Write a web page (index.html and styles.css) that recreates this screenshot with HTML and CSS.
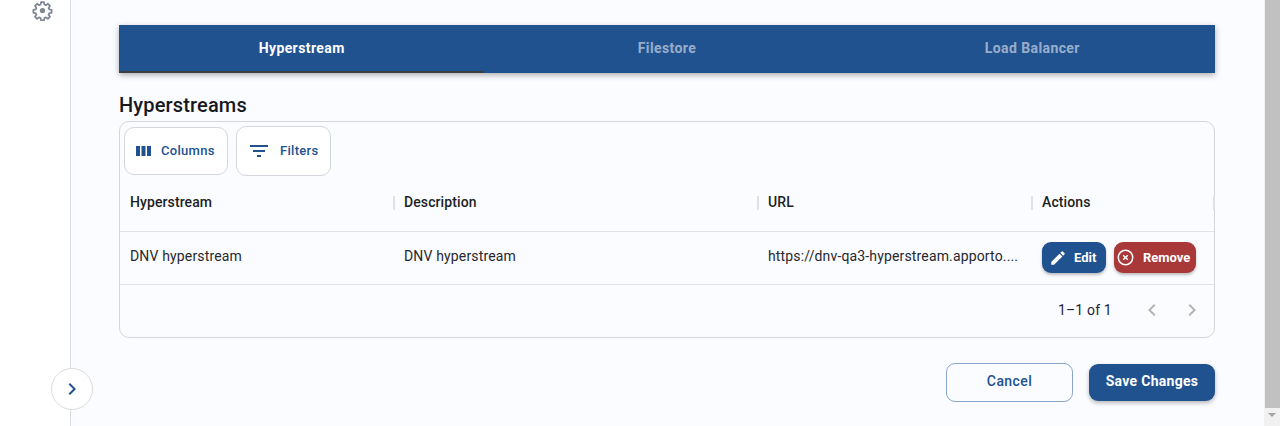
FILE: index.html
```html
<!DOCTYPE html>
<html lang="en">
<head>
<meta charset="utf-8">
<title>Hyperstreams</title>
<link rel="stylesheet" href="styles.css">
</head>
<body>
<div class="app">
  <aside class="sidebar">
    <svg class="gear" viewBox="0 0 24 24" width="21" height="21" fill="none" stroke="#7d8794" stroke-width="2" stroke-linejoin="round"><path d="M10.300 2.500h3.400l.5 2.700 1.700.7 2.300-1.600 2.400 2.400-1.600 2.300.7 1.700 2.700.5v3.400l-2.700.5-.7 1.700 1.600 2.300-2.400 2.400-2.300-1.600-1.700.7-.5 2.700h-3.400l-.5-2.700-1.700-.7-2.300 1.600-2.400-2.400 1.600-2.300-.7-1.700-2.700-.5v-3.400l2.700-.5.7-1.700-1.600-2.300 2.400-2.400 2.300 1.600 1.700-.7z"/><circle cx="12" cy="12" r="3" fill="#7d8794" stroke="none"/></svg>
  </aside>
  <button class="toggle" type="button" aria-label="Expand">
    <svg viewBox="0 0 24 24" width="24" height="24" fill="#215290"><path d="M10 6 8.590 7.410 13.170 12l-4.580 4.590L10 18l6-6z"/></svg>
  </button>
  <main class="main">
    <nav class="tabs">
      <div class="tab active">Hyperstream</div>
      <div class="tab">Filestore</div>
      <div class="tab">Load Balancer</div>
    </nav>
    <h1 class="title">Hyperstreams</h1>
    <section class="grid">
      <div class="toolbar">
        <button class="tool tool-columns" type="button">
          <svg viewBox="0 0 15 12" width="15" height="12" fill="#215290"><path d="M0 1h4v10H0zM5.500 1h4v10h-4zM11 1h4v10h-4z"/></svg>
          <span>Columns</span>
        </button>
        <button class="tool tool-filters" type="button">
          <svg viewBox="0 0 18 12" width="18" height="12" fill="#215290"><path d="M0 0h18v2H0zM3 5h12v2H3zM7 10h4v2H7z"/></svg>
          <span>Filters</span>
        </button>
      </div>
      <div class="row head">
        <div class="cell c1">Hyperstream</div>
        <div class="cell c2">Description</div>
        <div class="cell c3">URL</div>
        <div class="cell c4">Actions</div>
      </div>
      <div class="row body">
        <div class="cell c1 text">DNV hyperstream</div>
        <div class="cell c2 text">DNV hyperstream</div>
        <div class="cell c3 text"><span class="clip">https://dnv-qa3-hyperstream.apporto....</span></div>
        <div class="cell c4 actions">
          <button class="act edit" type="button">
            <svg viewBox="0 0 24 24" width="18" height="18" fill="#fff"><path d="M3 17.250V21h3.750L17.810 9.940l-3.750-3.750zM20.710 7.040a1 1 0 0 0 0-1.410l-2.340-2.340a1 1 0 0 0-1.410 0l-1.830 1.830 3.750 3.750z"/></svg>
            <span>Edit</span>
          </button>
          <button class="act remove" type="button">
            <svg viewBox="0 0 16 16" width="17" height="17" fill="none" stroke="#fff"><circle cx="8" cy="8" r="6.800" stroke-width="1.400"/><path d="M5.800 5.800l4.400 4.400M10.200 5.800l-4.400 4.400" stroke-width="1.400"/></svg>
            <span>Remove</span>
          </button>
        </div>
      </div>
      <div class="pager">
        <span class="count">1–1 of 1</span>
        <svg class="nav" viewBox="0 0 24 24" width="24" height="24" fill="#b4b4b4"><path d="M15.410 7.410 14 6l-6 6 6 6 1.410-1.410L10.830 12z"/></svg>
        <svg class="nav" viewBox="0 0 24 24" width="24" height="24" fill="#b4b4b4"><path d="M10 6 8.590 7.410 13.170 12l-4.580 4.590L10 18l6-6z"/></svg>
      </div>
    </section>
    <footer class="footer">
      <button class="btn cancel" type="button">Cancel</button>
      <button class="btn save" type="button">Save Changes</button>
    </footer>
  </main>
  <div class="scrollbar">
    <div class="thumb"></div>
    <div class="arrow"></div>
  </div>
</div>
</body>
</html>
```

FILE: styles.css
```css
* { box-sizing: border-box; }
html, body { margin: 0; height: 100%; overflow: hidden; }
body { font-family: Roboto, "Liberation Sans", sans-serif; color: #1b1b1f; }
button { font-family: inherit; cursor: pointer; }

.app { position: relative; display: flex; width: 1280px; height: 426px; background: #fff; overflow: hidden; }

.sidebar { flex: 0 0 71px; background: #fff; border-right: 1px solid #d9dce3; display: flex; justify-content: center; align-items: flex-start; padding-left: 15px; }

.toggle { position: absolute; left: 51px; top: 368px; width: 42px; height: 42px; border-radius: 50%; border: 1px solid #dcdcdc; background: #fff; padding: 0; display: flex; align-items: center; justify-content: center; z-index: 2; }

.main { flex: 1 1 auto; background: #fbfcff; padding: 25px 49px 0 48px; min-width: 0; }

.tabs { display: flex; height: 48px; background: #215290; box-shadow: 0 2px 6px rgba(0,0,0,.32); }
.tab { flex: 1 1 0; display: flex; align-items: center; justify-content: center; padding-bottom: 2px; font-size: 14px; font-weight: 700; letter-spacing: .4px; color: rgba(255,255,255,.55); }
.tab.active { color: #fff; box-shadow: inset 0 -2px 0 #3a4040; }

.title { margin: 20px 0 0; font-size: 20px; line-height: 24px; font-weight: 500; letter-spacing: .15px; color: #16181d; }

.grid { margin-top: 4px; height: 217px; border: 1px solid #d3d6dc; border-radius: 10px; display: flex; flex-direction: column; }

.toolbar { display: flex; align-items: center; gap: 8px; padding: 3px 0 0 4px; height: 55px; }
.tool { display: flex; align-items: center; background: #fff; border: 1px solid #d3d6dc; border-radius: 10px; padding: 0; font-size: 13px; font-weight: 500; color: #215290; letter-spacing: .3px; }
.tool span { padding-bottom: 2px; }
.tool-columns { width: 104px; height: 48px; gap: 10px; padding-left: 11px; }
.tool-filters { width: 95px; height: 50px; gap: 12px; padding-left: 13px; }

.row { display: flex; align-items: center; }
.head { height: 55px; padding-bottom: 5px; border-bottom: 1px solid #e0e2e7; font-size: 14px; font-weight: 500; letter-spacing: .1px; color: #1d1f24; }
.body { height: 53px; padding-bottom: 1px; border-bottom: 1px solid #e0e2e7; font-size: 14px; letter-spacing: .15px; color: #26282d; }
.cell { padding: 0 10px; min-width: 0; position: relative; }
.text { padding-bottom: 3px; }
.c1 { flex: 0 0 274px; }
.c2 { flex: 0 0 364px; }
.c3 { flex: 0 0 274px; padding-left: 10px; padding-right: 14px; }
.c4 { flex: 1 1 auto; padding-left: 10px; }
.clip { display: block; white-space: nowrap; }
.head .cell::after { content: ""; position: absolute; right: -1px; top: 2px; width: 2px; height: 14px; background: #dfe1e6; }

.actions { display: flex; gap: 8px; align-items: center; }
.act { display: flex; align-items: center; height: 31px; border: 0; border-radius: 9px; color: #fff; font-size: 13px; font-weight: 700; padding: 0; box-shadow: 0 2px 3px rgba(0,0,0,.25); }
.act.edit { width: 64px; background: #215290; gap: 7px; padding-left: 7px; }
.act.remove { width: 82px; background: #a93838; gap: 9px; padding-left: 3px; }

.pager { flex: 1 1 auto; display: flex; align-items: center; padding: 0 0 2px 938px; font-size: 14px; letter-spacing: .15px; color: #1d2433; }
.count { flex: none; width: 82px; }
.nav { flex: none; }
.nav + .nav { margin-left: 16px; }

.footer { display: flex; justify-content: flex-end; align-items: center; gap: 16px; margin-top: 25px; }
.btn { border-radius: 9px; font-size: 14px; font-weight: 700; letter-spacing: .3px; padding: 0 0 4px; }
.cancel { width: 127px; height: 39px; background: transparent; border: 1px solid #8aa6cc; color: #215290; font-weight: 500; letter-spacing: .4px; }
.save { width: 126px; height: 37px; background: #215290; border: 0; color: #fff; box-shadow: 0 2px 4px rgba(0,0,0,.28); }

.scrollbar { flex: 0 0 16px; display: flex; flex-direction: column; background: #f1f1f1; }
.thumb { height: 408px; background: #c1c1c1; margin-left: 1px; }
.arrow { align-self: center; margin-top: 5px; width: 0; height: 0; border-left: 4px solid transparent; border-right: 4px solid transparent; border-top: 4px solid #a3a3a3; }
```
